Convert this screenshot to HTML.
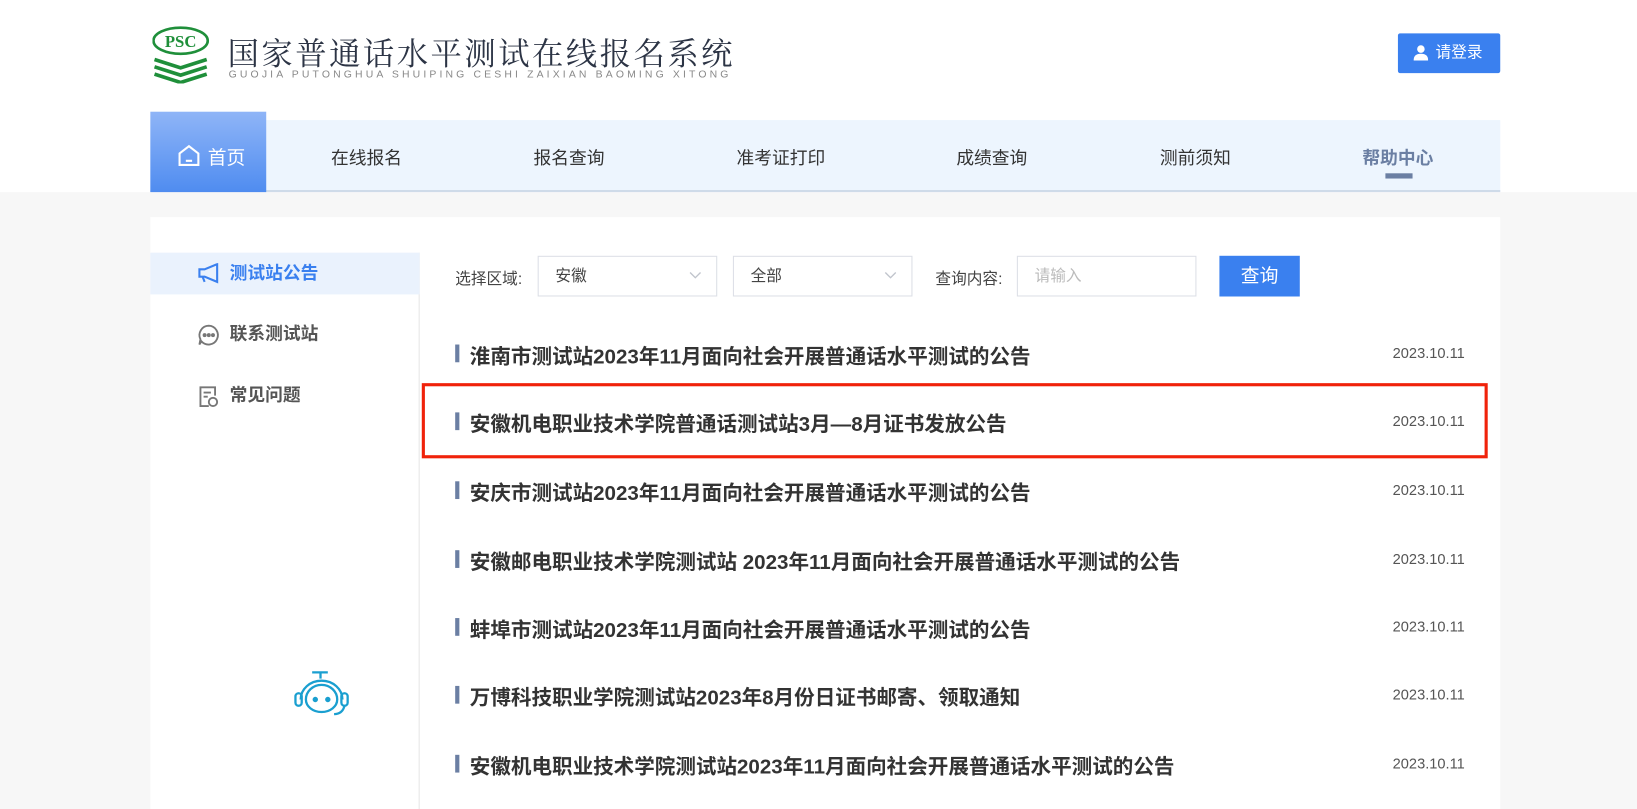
<!DOCTYPE html>
<html><head><meta charset="utf-8"><style>
*{margin:0;padding:0;box-sizing:border-box}
html,body{width:1637px;height:809px;overflow:hidden;background:#f7f7f7}
body{font-family:"Liberation Sans","Noto Sans CJK SC",sans-serif;position:relative}
#w{position:absolute;left:0;top:0;width:1568px;height:775px;transform:scale(1.04401);transform-origin:0 0}
.top{position:absolute;left:0;top:0;width:1568px;height:184px;background:#fff}
.abs{position:absolute}
.nav{position:absolute;left:144px;top:115px;width:1293px;height:69px;background:#edf5fe;border-bottom:2px solid #cfdbe9}
.nav span{position:absolute;top:22px;font-size:17px;color:#333;transform:translateX(-50%)}
.home{position:absolute;left:144px;top:107px;width:111px;height:77px;background:linear-gradient(#8fb5f7,#4f8cf0)}
.card{position:absolute;left:144px;top:208px;width:1293px;height:601px;background:#fff}
.side{position:absolute;left:144px;top:242px;width:258px;height:567px;border-right:1px solid #e6e6e6}
.si{position:absolute;left:0;width:258px;height:40px;font-size:17px;font-weight:bold;color:#555;line-height:40px;padding-left:76px}
.sel{position:absolute;top:245px;height:39px;border:1px solid #dcdfe6;font-size:15px;color:#444;line-height:37px;padding-left:16px}
.sel svg{position:absolute;right:14px;top:14px}
.item{position:absolute;left:436px;width:970px;height:26px}
.item b{position:absolute;left:0;top:4px;width:4px;height:17px;background:#6b7fa3}
.item .t{position:absolute;left:14px;top:-1px;font-size:19.7px;font-weight:bold;color:#333;white-space:nowrap}
.item .d{position:absolute;right:3px;top:4px;font-size:14px;color:#555}
</style></head><body><div id="w">
<div class="top"></div>
<svg class="abs" style="left:146px;top:24px" width="56" height="56" viewBox="0 0 56 56">
<ellipse cx="27" cy="15" rx="26" ry="12.5" fill="none" stroke="#1f8f3a" stroke-width="2.5"/>
<text x="27" y="21" font-family="Liberation Serif" font-weight="bold" font-size="16" fill="#1f8f3a" text-anchor="middle">PSC</text>
<g stroke="#1f8f3a" stroke-width="3.5" fill="none">
<path d="M2 33 L27 41 L52 33"/><path d="M2 40 L27 48 L52 40"/><path d="M2 47 L27 55 L52 47"/></g>
</svg>
<div class="abs" style="left:218px;top:27px;font-size:30px;color:#2c3445;letter-spacing:2.4px;font-family:'Noto Serif CJK SC',serif">国家普通话水平测试在线报名系统</div>
<div class="abs" style="left:219px;top:66px;font-size:10px;color:#888;letter-spacing:3.0px">GUOJIA PUTONGHUA SHUIPING CESHI ZAIXIAN BAOMING XITONG</div>
<div class="abs" style="left:1339px;top:32px;width:98px;height:38px;background:#3a80ef;border-radius:2px;color:#fff;font-size:15px;line-height:38px;padding-left:36px">请登录</div>
<svg class="abs" style="left:1354px;top:43px" width="14" height="15" viewBox="0 0 14 15"><circle cx="7" cy="4" r="3.6" fill="#fff"/><path d="M0 15 Q0 8.5 7 8.5 Q14 8.5 14 15Z" fill="#fff"/></svg>
<div class="nav">
<span style="left:207px">在线报名</span><span style="left:401px">报名查询</span><span style="left:604px">准考证打印</span><span style="left:806px">成绩查询</span><span style="left:1001px">测前须知</span><span style="left:1195px;color:#6b7fa3;font-weight:bold">帮助中心</span>
<div class="abs" style="left:1183px;top:51px;width:26px;height:5px;background:#6b7fa3"></div>
</div>
<div class="home"></div>
<svg class="abs" style="left:170px;top:138px" width="22" height="22" viewBox="0 0 22 22" fill="none" stroke="#fff" stroke-width="2"><path d="M2 9 L11 2 L20 9 V20 H2Z"/><path d="M8 16 H14"/></svg>
<div class="abs" style="left:199px;top:137px;color:#fff;font-size:18px">首页</div>
<div class="card"></div>
<div class="side">
<div class="si" style="top:0;background:#eaf2fd;color:#3a80ef">测试站公告</div>
<div class="si" style="top:58px">联系测试站</div>
<div class="si" style="top:117px">常见问题</div>
</div>
<svg class="abs" style="left:189px;top:252px" width="22" height="20" viewBox="0 0 22 20" fill="none" stroke="#3a80ef" stroke-width="2"><path d="M2 6 H7 L19 1 V18 L7 13 H2Z"/><path d="M5 13 L7 18"/></svg>
<svg class="abs" style="left:189px;top:310px" width="22" height="22" viewBox="0 0 22 22" fill="none" stroke="#777" stroke-width="1.8"><path d="M11 2 A9 9 0 1 1 4 17 L2 20 L3 15 A9 9 0 0 1 11 2Z"/><circle cx="7" cy="11" r="1" fill="#777"/><circle cx="11" cy="11" r="1" fill="#777"/><circle cx="15" cy="11" r="1" fill="#777"/></svg>
<svg class="abs" style="left:190px;top:369px" width="20" height="22" viewBox="0 0 20 22" fill="none" stroke="#777" stroke-width="1.8"><path d="M10 20 H2 V2 H16 V10"/><path d="M5 7 H12 M5 11 H9"/><circle cx="14" cy="16" r="4"/></svg>
<svg class="abs" style="left:280px;top:640px" width="58" height="46" viewBox="0 0 58 46" fill="none" stroke="#1a9fd0" stroke-width="2.2"><path d="M19 4 H34 M27 4 V10"/><path d="M8 30 A20 18 0 0 1 48 30"/><path d="M13 30 A15 14 0 0 1 43 30 A15 12 0 0 1 13 30Z"/><rect x="3" y="24" width="6" height="12" rx="3"/><rect x="47" y="24" width="6" height="12" rx="3"/><circle cx="22" cy="30" r="1.5" fill="#1a9fd0"/><circle cx="34" cy="30" r="1.5" fill="#1a9fd0"/><path d="M50 36 Q48 44 40 44"/></svg>
<div class="abs" style="left:436px;top:256px;font-size:15px;color:#444">选择区域:</div>
<div class="sel" style="left:515px;width:172px">安徽<svg width="12" height="8" viewBox="0 0 12 8"><path d="M1 1 L6 6 L11 1" fill="none" stroke="#c0c4cc" stroke-width="1.3"/></svg></div>
<div class="sel" style="left:702px;width:172px">全部<svg width="12" height="8" viewBox="0 0 12 8"><path d="M1 1 L6 6 L11 1" fill="none" stroke="#c0c4cc" stroke-width="1.3"/></svg></div>
<div class="abs" style="left:896px;top:256px;font-size:15px;color:#444">查询内容:</div>
<div class="sel" style="left:974px;width:172px;color:#bbb">请输入</div>
<div class="abs" style="left:1168px;top:245px;width:77px;height:39px;background:#3a80ef;color:#fff;font-size:18px;text-align:center;line-height:39px">查询</div>
<div class="item" style="top:326px"><b></b><span class="t">淮南市测试站2023年11月面向社会开展普通话水平测试的公告</span><span class="d">2023.10.11</span></div>
<div class="item" style="top:391px"><b></b><span class="t">安徽机电职业技术学院普通话测试站3月—8月证书发放公告</span><span class="d">2023.10.11</span></div>
<div class="item" style="top:457px"><b></b><span class="t">安庆市测试站2023年11月面向社会开展普通话水平测试的公告</span><span class="d">2023.10.11</span></div>
<div class="item" style="top:523px"><b></b><span class="t">安徽邮电职业技术学院测试站 2023年11月面向社会开展普通话水平测试的公告</span><span class="d">2023.10.11</span></div>
<div class="item" style="top:588px"><b></b><span class="t">蚌埠市测试站2023年11月面向社会开展普通话水平测试的公告</span><span class="d">2023.10.11</span></div>
<div class="item" style="top:653px"><b></b><span class="t">万博科技职业学院测试站2023年8月份日证书邮寄、领取通知</span><span class="d">2023.10.11</span></div>
<div class="item" style="top:719px"><b></b><span class="t">安徽机电职业技术学院测试站2023年11月面向社会开展普通话水平测试的公告</span><span class="d">2023.10.11</span></div>
<div class="abs" style="left:404px;top:367px;width:1021px;height:72px;border:3px solid #f0220a"></div>
</div></body></html>
